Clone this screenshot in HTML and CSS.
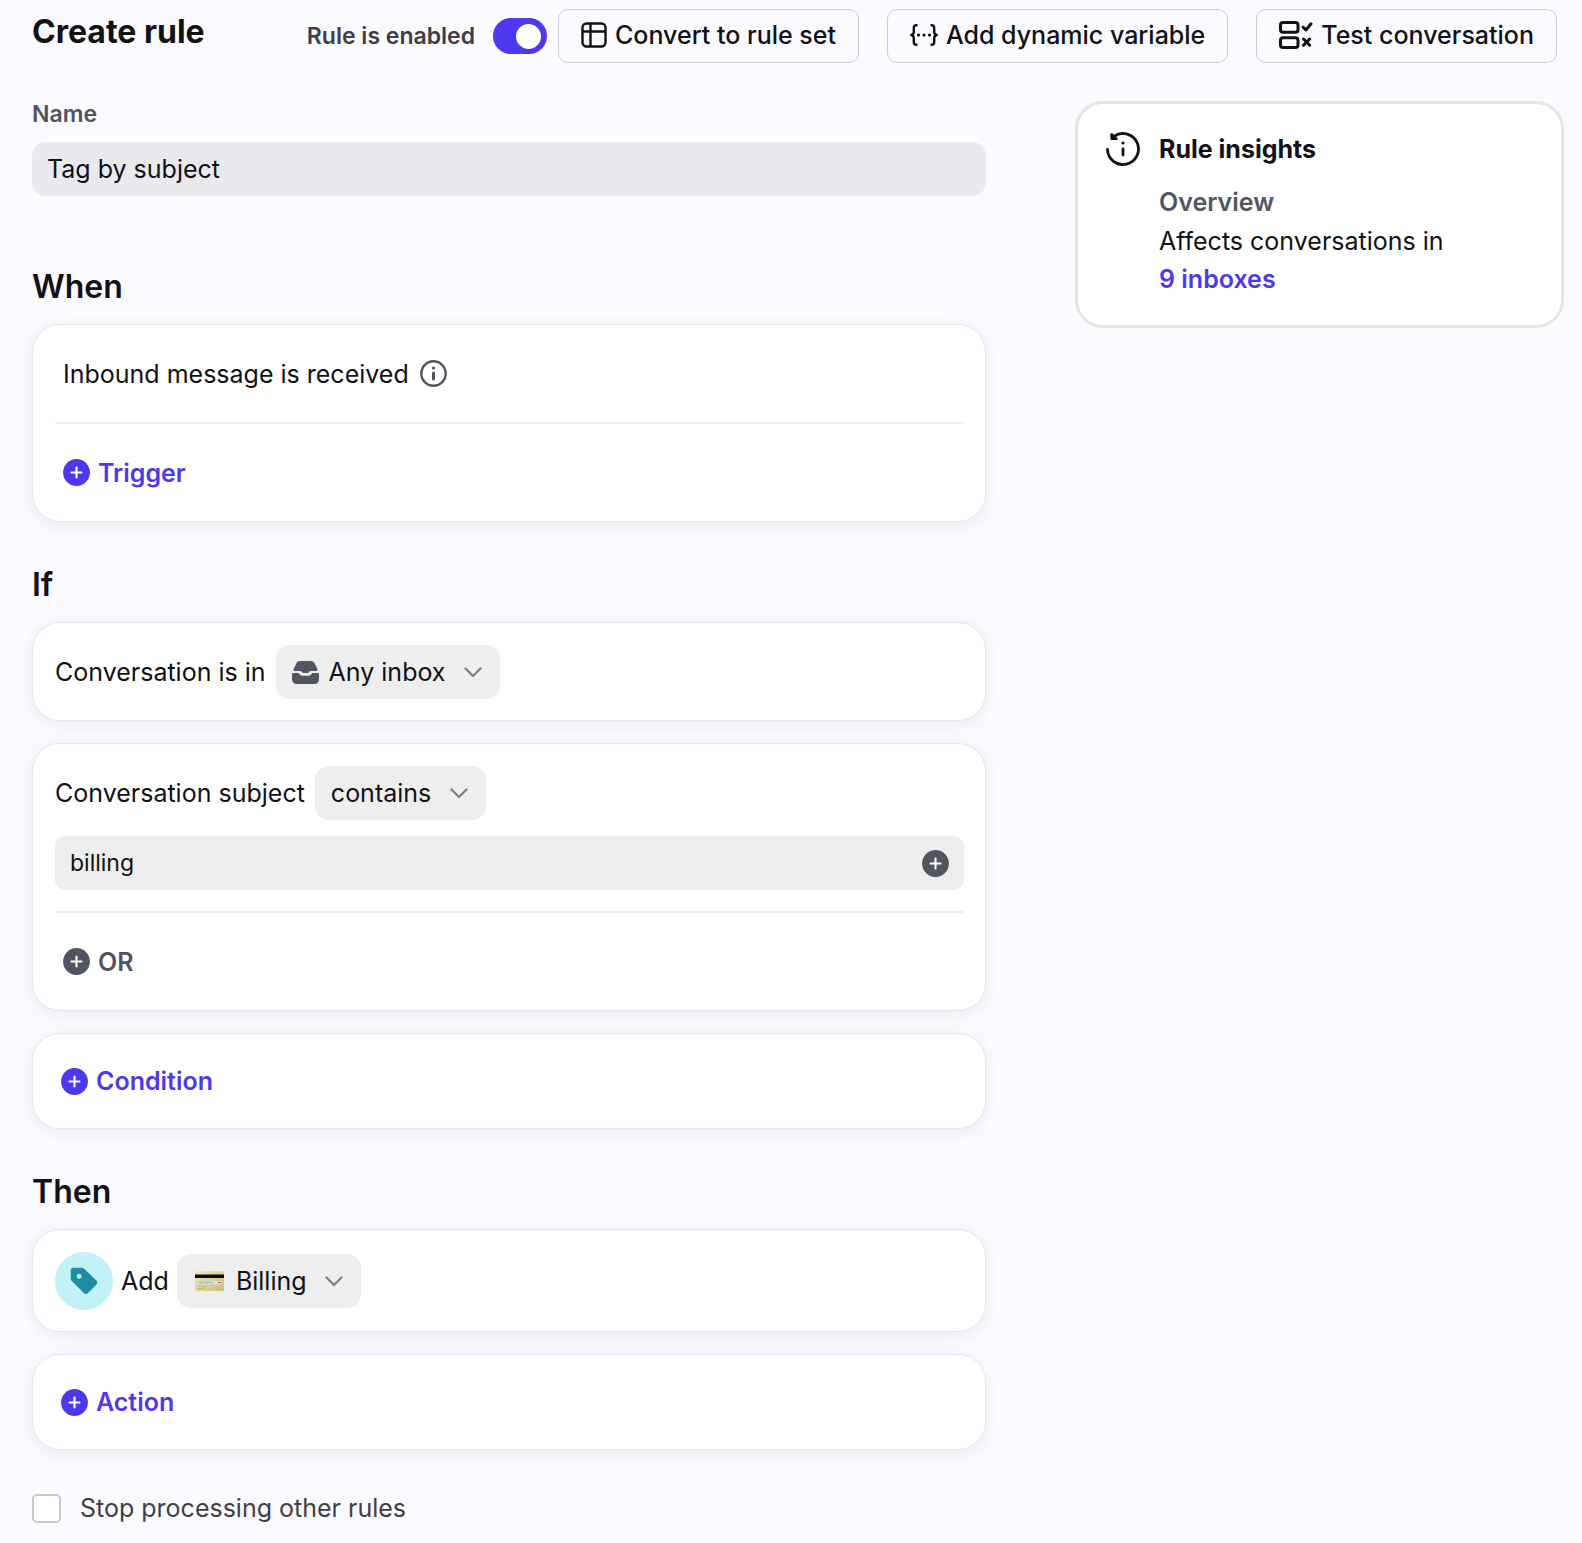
FILE: index.html
```html
<!DOCTYPE html>
<html lang="en">
<head>
<meta charset="utf-8">
<meta name="viewport" content="width=device-width, initial-scale=1">
<title>Create rule</title>
<link rel="stylesheet" href="styles.css">
</head>
<body>
<svg class="sprite" aria-hidden="true">
  <symbol id="plus" viewBox="0 0 27 27">
    <circle cx="13.500" cy="13.500" r="13.400" fill="currentColor"/>
    <path d="M13.500 8.500v10M8.500 13.500h10" fill="none" stroke="#fff" stroke-width="2.100" stroke-linecap="round"/>
  </symbol>
  <symbol id="chevron" viewBox="0 0 18 11">
    <path d="M1.500 1.500 9 9l7.500-7.500" fill="none" stroke="currentColor" stroke-width="2.200" stroke-linecap="round" stroke-linejoin="round"/>
  </symbol>
</svg>

<header class="topbar">
  <h1 class="title">Create rule</h1>
  <div class="topbar-actions">
    <div class="enable-group">
      <label class="toggle-label">Rule is enabled
        <input class="toggle" type="checkbox" role="switch" checked>
      </label>
      <button class="button" type="button">
        <svg class="icon-table" viewBox="0 0 26 26" fill="none" stroke="currentColor" stroke-width="2.400" aria-hidden="true">
          <rect x="1.500" y="1.500" width="23" height="23" rx="4"/>
          <path d="M9.500 1.500v23M1.500 9.500h23"/>
        </svg>
        Convert to rule set
      </button>
    </div>
    <button class="button" type="button">
      <svg class="icon-braces" viewBox="0 0 28 24" fill="none" stroke="currentColor" stroke-width="2.400" stroke-linecap="round" stroke-linejoin="round" aria-hidden="true">
        <path d="M6.500 2.200C4.200 2.200 3.800 3.400 3.800 5v3.800c0 1.900-.7 2.800-2.500 3.200 1.800.4 2.500 1.300 2.500 3.200V19c0 1.600.4 2.800 2.700 2.800M21.500 2.200c2.300 0 2.700 1.200 2.700 2.800v3.800c0 1.900.7 2.800 2.500 3.200-1.800.4-2.500 1.300-2.500 3.200V19c0 1.600-.4 2.800-2.700 2.800"/>
        <path d="M8.500 12h.01M14 12h.01M19.500 12h.01" stroke-width="3.200"/>
      </svg>
      Add dynamic variable
    </button>
    <button class="button" type="button">
      <svg class="icon-test" viewBox="0 0 34 28" fill="none" stroke="currentColor" stroke-width="3" stroke-linecap="round" stroke-linejoin="round" aria-hidden="true">
        <rect x="1.500" y="1.500" width="17.500" height="9.800" rx="2.600"/>
        <rect x="1.500" y="16.700" width="17.500" height="9.800" rx="2.600"/>
        <path d="m24 6.200 3 2.800 5-6.200M24.500 18l6.200 6.200M30.700 18l-6.200 6.200"/>
      </svg>
      Test conversation
    </button>
  </div>
</header>

<main class="layout">
  <form class="rule-form">
    <div class="field">
      <label class="field-label" for="rule-name">Name</label>
      <input class="name-input" id="rule-name" type="text" value="Tag by subject">
    </div>

    <section class="section section-first">
      <h2 class="section-title">When</h2>
      <div class="card">
        <div class="trigger-row">
          Inbound message is received
          <svg class="icon-info" viewBox="0 0 27 27" aria-hidden="true">
            <circle cx="13.500" cy="13.500" r="12.200" fill="none" stroke="currentColor" stroke-width="2.400"/>
            <circle cx="13.500" cy="8" r="1.600" fill="currentColor"/>
            <path d="M13.500 13v6" stroke="currentColor" stroke-width="3" stroke-linecap="round"/>
          </svg>
        </div>
        <div class="add-row">
          <button class="add-button" type="button"><svg class="icon-plus" aria-hidden="true"><use href="#plus"/></svg>Trigger</button>
        </div>
      </div>
    </section>

    <section class="section">
      <h2 class="section-title">If</h2>
      <div class="card">
        <div class="clause">
          <label for="inbox">Conversation is in</label>
          <span class="picker">
            <svg class="icon-inbox" viewBox="0 0 27 23" fill="currentColor" aria-hidden="true">
              <path d="M8.500 0h10c2 0 3.300.7 4.200 2.400L25.400 8c.5 1.100.1 1.900-1 2h-5c-1.100 0-1.700.3-2.200 1.100-.5.700-.9.900-1.700.9h-4c-.8 0-1.200-.2-1.700-.9-.5-.8-1.100-1.100-2.200-1.100h-5c-1.100-.1-1.500-.9-1-2l2.700-5.600C5.200.7 6.500 0 8.500 0z"/>
              <path d="M1.500 12h4.400c.8 0 1.200.3 1.600 1 .7 1.200 1.600 1.700 3 1.700h6c1.400 0 2.300-.5 3-1.700.4-.7.800-1 1.600-1h4.400c1 0 1.500.5 1.500 1.500V18c0 3-2 5-5 5H5c-3 0-5-2-5-5v-4.500C0 12.500.5 12 1.500 12z"/>
            </svg>
            <select class="picker-select" id="inbox"><option>Any inbox</option></select>
            <svg class="icon-chevron" aria-hidden="true"><use href="#chevron"/></svg>
          </span>
        </div>
      </div>
      <div class="card">
        <div class="clause">
          <label for="operator">Conversation subject</label>
          <span class="picker">
            <select class="picker-select" id="operator"><option>contains</option></select>
            <svg class="icon-chevron" aria-hidden="true"><use href="#chevron"/></svg>
          </span>
        </div>
        <div class="value-box">
          <input class="value-input" type="text" value="billing" aria-label="Subject contains">
          <button class="add-value" type="button" aria-label="Add value"><svg class="icon-plus" aria-hidden="true"><use href="#plus"/></svg></button>
        </div>
        <div class="add-row">
          <button class="add-button add-muted" type="button"><svg class="icon-plus" aria-hidden="true"><use href="#plus"/></svg>OR</button>
        </div>
      </div>
      <div class="card card-add">
        <button class="add-button" type="button"><svg class="icon-plus" aria-hidden="true"><use href="#plus"/></svg>Condition</button>
      </div>
    </section>

    <section class="section">
      <h2 class="section-title">Then</h2>
      <div class="card">
        <div class="clause clause-action">
          <span class="tag-badge">
            <svg class="icon-tag" viewBox="0 0 28 28" aria-hidden="true">
              <path fill="currentColor" fill-rule="evenodd" d="M3.500.8h8.200c1.100 0 2 .4 2.800 1.100l11.800 11.600c1.300 1.300 1.300 2.900 0 4.200l-8.200 8.200c-1.300 1.300-2.900 1.300-4.200 0L1.900 14.300C1.100 13.500.7 12.600.7 11.500V3.600C.7 1.900 1.800.8 3.500.8zM9.200 6.700a2.500 2.500 0 1 0 0 5 2.500 2.500 0 0 0 0-5z"/>
            </svg>
          </span>
          <label for="tag">Add</label>
          <span class="picker">
            <svg class="icon-card" viewBox="0 0 33 22" aria-hidden="true">
              <defs><linearGradient id="gold" x1="0" y1="0" x2="1" y2="1"><stop offset="0" stop-color="#f3eba6"/><stop offset=".6" stop-color="#d9cf91"/><stop offset="1" stop-color="#c9bd7c"/></linearGradient></defs>
              <rect x="2" y="1" width="29" height="20" rx="1.500" fill="url(#gold)"/>
              <path d="M2 4.500h29V8H2z" fill="#0b0b0b"/>
              <path d="M4.500 11h24v3.500h-24z" fill="#d9dee0"/>
              <path d="m5 13.500 2-2 1 2 2-2 1.500 2 2-2 1 2 2-2 1.500 2 2-1.500" fill="none" stroke="#6f9dc4" stroke-width=".8"/>
              <path d="M25 12.500h3" stroke="#777" stroke-width="1"/>
              <path d="M4.500 16.500h9M4.500 18.500h6" stroke="#b7ac70" stroke-width=".7"/>
            </svg>
            <select class="picker-select" id="tag"><option>Billing</option></select>
            <svg class="icon-chevron" aria-hidden="true"><use href="#chevron"/></svg>
          </span>
        </div>
      </div>
      <div class="card card-add">
        <button class="add-button" type="button"><svg class="icon-plus" aria-hidden="true"><use href="#plus"/></svg>Action</button>
      </div>
    </section>

    <label class="stop-row"><input class="checkbox" type="checkbox">Stop processing other rules</label>
  </form>

  <aside class="insights">
    <svg class="icon-history" viewBox="0 0 34 34" fill="none" stroke="currentColor" stroke-width="2.800" stroke-linecap="round" stroke-linejoin="round" aria-hidden="true">
      <path d="M1.500 17.500A15.500 15.500 0 1 0 8 4.400"/>
      <path d="M5.600 2.200v4.600h5z" fill="currentColor" stroke-width="2.400"/>
      <path d="M17 17v6"/>
      <path d="M17 11h.01" stroke-width="3.200"/>
    </svg>
    <div class="insights-body">
      <h2 class="insights-title">Rule insights</h2>
      <h3 class="insights-subtitle">Overview</h3>
      <p class="insights-text">Affects conversations in</p>
      <a class="insights-link" href="#inboxes">9 inboxes</a>
    </div>
  </aside>
</main>
</body>
</html>
```

FILE: styles.css
```css
:root {
  --ink: #111116;
  --muted: #50555f;
  --accent: #4d38ee;
  --page: #fbfaff;
  --fill: #eeeeee;
  --line: #ededf4;
}

* { box-sizing: border-box; }

body {
  margin: 0;
  background: var(--page);
  color: var(--ink);
  font: 400 25px/38px Inter, "Liberation Sans", sans-serif;
}

h1, h2, h3, p { margin: 0; }

button, input, select {
  margin: 0;
  padding: 0;
  border: 0;
  background: none;
  color: inherit;
  font: inherit;
}

svg { display: block; flex: none; }
.sprite { display: none; }

/* Top bar */
.topbar {
  display: flex;
  align-items: center;
  justify-content: space-between;
  padding: 9px 25px 0 32px;
}
.title { font-size: 32px; font-weight: 700; line-height: 40px; padding-bottom: 8px; }
.topbar-actions { display: flex; gap: 28px; }
.enable-group { display: flex; align-items: center; gap: 11px; }
.toggle-label {
  display: flex;
  align-items: center;
  gap: 18px;
  color: #3f3e47;
  font-size: 23px;
  font-weight: 600;
}
.toggle {
  appearance: none;
  display: flex;
  align-items: center;
  justify-content: flex-end;
  width: 54px;
  height: 36px;
  padding: 6px;
  border-radius: 18px;
  background: #a5a5b0;
}
.toggle::before {
  content: "";
  width: 25px;
  height: 25px;
  border-radius: 50%;
  background: #fff;
}
.toggle:not(:checked) { justify-content: flex-start; }
.toggle:checked { background: var(--accent); }
.button {
  display: flex;
  align-items: center;
  gap: 8px;
  height: 54px;
  padding: 0 22px 2px;
  border: 1px solid #cbcad1;
  border-radius: 10px;
  font-weight: 500;
  white-space: nowrap;
}
.icon-table { width: 26px; height: 26px; }
.icon-braces { width: 28px; height: 24px; }
.icon-test { width: 34px; height: 28px; }

/* Page columns */
.layout {
  display: grid;
  grid-template-columns: minmax(0, 1fr) 489px;
  align-items: start;
  gap: 89px;
  padding: 38px 18px 14px 32px;
}

/* Form */
.field { display: flex; flex-direction: column; gap: 15px; }
.field-label { color: var(--muted); font-size: 23px; font-weight: 600; line-height: 26px; }
.name-input {
  width: 100%;
  height: 54px;
  padding: 0 15px;
  border-radius: 14px;
  background: #eae9ee;
}
.section { display: flex; flex-direction: column; gap: 22px; margin-top: 43px; }
.section-first { margin-top: 71px; }
.section-title { font-size: 32px; font-weight: 600; line-height: 40px; margin-bottom: -5px; }
.card {
  padding: 22px 21px 21px 22px;
  border: 1px solid #e6e5ee;
  border-radius: 28px;
  background: #fff;
  box-shadow: 0 3px 16px rgba(60, 30, 90, 0.07);
}
.trigger-row {
  display: flex;
  align-items: center;
  gap: 11px;
  height: 97px;
  margin-top: -22px;
  padding-left: 8px;
}
.icon-info { width: 27px; height: 27px; color: var(--muted); }
.add-row {
  display: flex;
  align-items: center;
  height: 99px;
  margin-bottom: -21px;
  padding-left: 8px;
  border-top: 2px solid var(--line);
}
.add-button {
  display: flex;
  align-items: center;
  gap: 8px;
  color: var(--accent);
  font-weight: 600;
}
.add-muted { color: var(--muted); }
.icon-plus { width: 27px; height: 27px; }
.card-add { padding: 28px; }
.clause { display: flex; align-items: center; gap: 10px; }
.picker {
  display: flex;
  align-items: center;
  gap: 10px;
  height: 54px;
  padding: 0 18px 0 16px;
  border-radius: 14px;
  background: var(--fill);
}
.picker-select { appearance: none; height: 38px; margin-right: 8px; }
.icon-inbox { width: 27px; height: 23px; color: var(--muted); }
.icon-chevron { width: 18px; height: 11px; color: #7c7d8a; }
.icon-card { width: 33px; height: 22px; }
.value-box {
  display: flex;
  align-items: center;
  height: 54px;
  margin: 16px 0 21px;
  padding: 0 15px;
  border-radius: 10px;
  background: var(--fill);
}
.value-input { flex: 1; min-width: 0; font-size: 23px; }
.add-value { color: var(--muted); }
.clause-action { gap: 8px; }
.tag-badge {
  display: grid;
  place-items: center;
  width: 58px;
  height: 58px;
  border-radius: 50%;
  background: #c2f1f6;
  color: #1e8fa3;
}
.icon-tag { width: 28px; height: 28px; }
.stop-row {
  display: flex;
  align-items: center;
  gap: 19px;
  margin-top: 39px;
  color: #3f3e47;
}
.checkbox {
  appearance: none;
  width: 29px;
  height: 29px;
  border: 2px solid #c9c8ce;
  border-radius: 5px;
  background: #fff;
}
.checkbox:checked { background: var(--accent); }

/* Insights */
.insights {
  display: flex;
  gap: 19px;
  padding: 28px 28px 27px;
  border: 3px solid #e5e5e5;
  border-radius: 28px;
  background: #fff;
}
.icon-history { width: 34px; height: 34px; }
.insights-title { font-size: 25px; font-weight: 700; line-height: 34px; margin-bottom: 17px; }
.insights-subtitle { color: var(--muted); font-size: 25px; font-weight: 600; margin-bottom: 1px; }
.insights-link { color: var(--accent); font-weight: 600; text-decoration: none; }
```
